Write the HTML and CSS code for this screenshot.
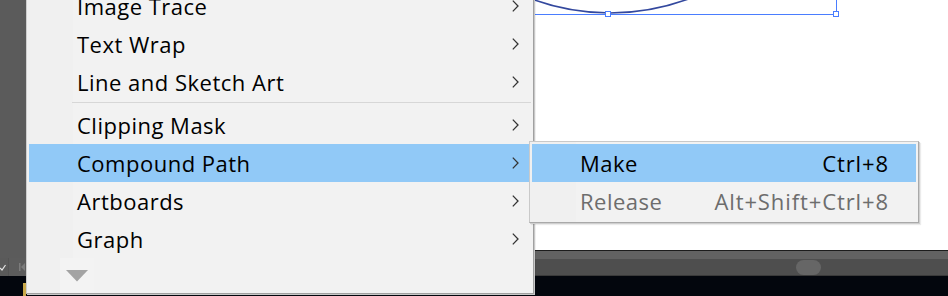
FILE: index.html
```html
<!DOCTYPE html>
<html>
<head>
<meta charset="utf-8">
<link rel="stylesheet" href="styles.css">
</head>
<body>
<div class="app">
  <div class="side">
    <div class="side-panel"></div>
    <div class="side-tools">
      <span class="tool-a"><svg width="8" height="18" viewBox="0 0 8 18"><path d="M0 10 L2 12 L5.5 7" fill="none" stroke="#e6e6e6" stroke-width="1.2"/></svg></span>
      <span class="tool-b"><svg width="8" height="10" viewBox="0 0 8 10"><rect x="1" y="1" width="1.5" height="8" fill="#7c7c7c"/><path d="M7 1 L3 5 L7 9 Z" fill="#7c7c7c"/></svg></span>
    </div>
    <div class="side-dock"><span class="folder"></span></div>
  </div>
  <div class="doc">
    <div class="canvas">
      <svg class="art" width="922" height="250" viewBox="26 0 922 250">
        <circle cx="610" cy="-213" r="226" fill="none" stroke="#33489e" stroke-width="1.7"/>
        <path d="M300 14.5 H836.5 V0" fill="none" stroke="#4a7dff" stroke-width="1"/>
        <rect x="605.5" y="11.5" width="5" height="5" fill="#fff" stroke="#4a7dff" stroke-width="1"/>
        <rect x="833.5" y="11.5" width="5" height="5" fill="#fff" stroke="#4a7dff" stroke-width="1"/>
      </svg>
    </div>
    <div class="hscroll">
      <div class="hscroll-top"></div>
      <div class="hscroll-track"><span class="thumb"></span></div>
    </div>
    <div class="dock"></div>
  </div>

  <div class="menu">
    <div class="item"><span class="label">Image Trace</span><span class="chev"></span></div>
    <div class="item"><span class="label">Text Wrap</span><span class="chev"></span></div>
    <div class="item"><span class="label">Line and Sketch Art</span><span class="chev"></span></div>
    <div class="sep"></div>
    <div class="item"><span class="label">Clipping Mask</span><span class="chev"></span></div>
    <div class="item active"><span class="label">Compound Path</span><span class="chev"></span></div>
    <div class="item"><span class="label">Artboards</span><span class="chev"></span></div>
    <div class="item"><span class="label">Graph</span><span class="chev"></span></div>
    <div class="more"><span class="more-btn"><svg width="22" height="12" viewBox="0 0 22 12"><path d="M0 0 H22 L11 11.5 Z" fill="#a3a3a3"/></svg></span></div>
  </div>

  <div class="submenu">
    <div class="sitem active"><span class="label">Make</span><span class="key">Ctrl+8</span></div>
    <div class="sitem disabled"><span class="label">Release</span><span class="key">Alt+Shift+Ctrl+8</span></div>
  </div>
</div>
</body>
</html>
```

FILE: styles.css
```css
html, body {
  margin: 0;
  padding: 0;
  background: #03060d;
}
.app {
  position: relative;
  width: 948px;
  height: 296px;
  overflow: hidden;
  display: grid;
  grid-template-columns: 26px 1fr;
  font-family: "Open Sans", "Noto Sans", sans-serif;
}
.side {
  display: flex;
  flex-direction: column;
}
.side-panel {
  height: 258px;
  background: #5b5b5b;
}
.side-tools {
  height: 18px;
  background: #535353;
  display: flex;
  align-items: stretch;
  gap: 1px;
}
.tool-a {
  width: 8px;
  background: #5a5a5a;
  display: flex;
}
.tool-b {
  flex: 1;
  background: #5c5c5c;
  display: flex;
  align-items: center;
  justify-content: flex-end;
}
.side-dock {
  flex: 1;
  background: #03060d;
  position: relative;
}
.folder {
  position: absolute;
  right: 0;
  top: 7px;
  width: 3px;
  height: 13px;
  background: #c9a94a;
}
.doc {
  display: flex;
  flex-direction: column;
}
.canvas {
  height: 250px;
  background: #ffffff;
  border-bottom: 1px solid #1c1c1c;
}
.art {
  display: block;
}
.hscroll {
  display: flex;
  flex-direction: column;
}
.hscroll-top {
  height: 8px;
  background: #626262;
}
.hscroll-track {
  height: 16px;
  background: #4e4e4e;
  border-bottom: 1px solid #3a3a3a;
  position: relative;
}
.thumb {
  position: absolute;
  left: 770px;
  top: 1px;
  width: 25px;
  height: 15px;
  border-radius: 8px;
  background: #666666;
}
.dock {
  flex: 1;
  background: #03060d;
}

/* context menu */
.menu {
  position: absolute;
  left: 26px;
  top: -14px;
  width: 502px;
  padding: 0 2px;
  background: linear-gradient(to right, #f0f0f0 46px, #f2f2f2 46px);
  border: 1px solid #cdcdcd;
  border-right-color: #a0a0a0;
  border-bottom-color: #a0a0a0;
  box-shadow: 1px 1px 0 #c8c8c8, 2px 2px 0 rgba(0,0,0,0.06);
  color: #000;
  font-size: 22px;
  letter-spacing: 0.5px;
}
.item {
  height: 38px;
  display: flex;
  align-items: center;
  justify-content: space-between;
  padding: 0 12px 0 48px;
}
.item.active {
  background: #91c9f7;
}
.label {
  white-space: nowrap;
}
.chev {
  width: 7px;
  height: 12px;
  background: no-repeat center / 7px 12px url("data:image/svg+xml,%3Csvg xmlns='http://www.w3.org/2000/svg' width='7' height='12' viewBox='0 0 7 12'%3E%3Cpath d='M0.8 0.6 L6 6 L0.8 11.4' fill='none' stroke='%23333' stroke-width='1.3'/%3E%3C/svg%3E");
}
.sep {
  height: 1px;
  margin: 1px 0 3px 43px;
  background: #d7d7d7;
}
.more {
  height: 35px;
  display: flex;
}
.more-btn {
  margin-left: 31px;
  width: 34px;
  height: 35px;
  background: #f3f3f3;
  display: flex;
  justify-content: center;
  padding-top: 12px;
  box-sizing: border-box;
}

/* submenu */
.submenu {
  position: absolute;
  left: 529px;
  top: 141px;
  width: 384px;
  padding: 2px;
  background: linear-gradient(to right, #f0f0f0 46px, #f2f2f2 46px);
  border: 1px solid #c9c9c9;
  border-right-color: #a9a9a9;
  border-bottom-color: #a9a9a9;
  box-shadow: 1px 1px 0 #cfcfcf, 2px 2px 1px rgba(0,0,0,0.08);
  font-size: 22px;
  letter-spacing: 0.5px;
}
.sitem {
  height: 38px;
  display: flex;
  align-items: center;
  justify-content: space-between;
  padding: 0 28px 0 48px;
}
.sitem.active {
  background: #91c9f7;
  color: #000;
}
.sitem.disabled {
  color: #6d6d6d;
}
.key {
  letter-spacing: 0.9px;
  margin-right: -1px;
}
```
